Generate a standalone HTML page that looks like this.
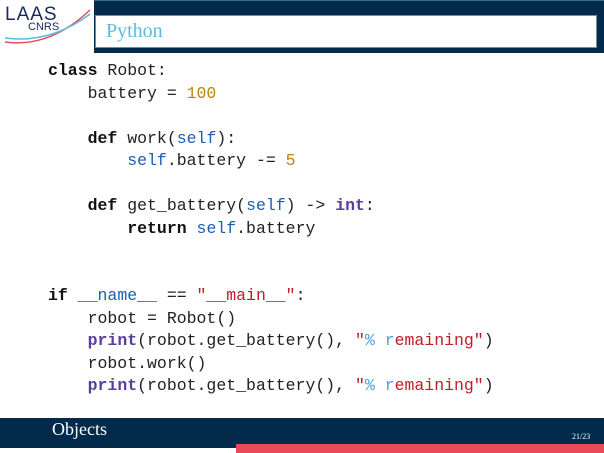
<!DOCTYPE html>
<html><head><meta charset="utf-8"><style>
body{margin:0;width:604px;height:453px;position:relative;background:#fff;overflow:hidden}
.a{position:absolute}
pre{position:absolute;left:48px;top:60px;margin:0;font-family:"Liberation Mono",monospace;font-size:16.5px;line-height:22.5px;color:#222}
b{font-weight:bold;color:#111}
.k{color:#1a5fb4}.n{color:#b8860b}.p{color:#5a3e9e;font-weight:bold}.s{color:#c01c28}.f{color:#4aa3df}
</style></head><body>
<div class="a" style="left:94px;top:0;width:510px;height:53px;background:#022a4b;border-top:1px solid #3a6a8a;box-sizing:border-box"></div>
<div class="a" style="left:95px;top:15px;width:502px;height:33px;background:#fff;border:1px solid #7a8a9a;box-sizing:border-box"></div>
<div class="a" style="left:106px;top:20px;font-family:'Liberation Serif',serif;font-size:20px;color:#5bbcdc">Python</div>
<div class="a" style="left:5px;top:4px;font-family:'Liberation Sans',sans-serif;font-size:19px;letter-spacing:1px;color:#1a2a5a">LAAS</div>
<div class="a" style="left:28px;top:21px;font-family:'Liberation Sans',sans-serif;font-size:11px;color:#1a2a5a">CNRS</div>
<svg class="a" style="left:0;top:0" width="94" height="50"><path d="M5 42 Q50 48 90 10" stroke="#e84a5a" stroke-width="1.5" fill="none"/><path d="M5 38 Q50 44 90 14" stroke="#5bbcdc" stroke-width="1.5" fill="none"/></svg>
<pre><b>class</b> Robot:
    battery = <span class="n">100</span>

    <b>def</b> work(<span class="k">self</span>):
        <span class="k">self</span>.battery -= <span class="n">5</span>

    <b>def</b> get_battery(<span class="k">self</span>) -&gt; <span class="p">int</span>:
        <b>return</b> <span class="k">self</span>.battery


<b>if</b> <span class="k">__name__</span> == <span class="s">"__main__"</span>:
    robot = Robot()
    <span class="p">print</span>(robot.get_battery(), <span class="s">"<span class="f">%</span> <span class="f">r</span>emaining"</span>)
    robot.work()
    <span class="p">print</span>(robot.get_battery(), <span class="s">"<span class="f">%</span> <span class="f">r</span>emaining"</span>)</pre>
<div class="a" style="left:0;top:418px;width:604px;height:30px;background:#022a4b"></div>
<div class="a" style="left:236px;top:444px;width:368px;height:9px;background:#e84a5a"></div>
<div class="a" style="left:52px;top:419px;font-family:'Liberation Serif',serif;font-size:18px;color:#fff">Objects</div>
<div class="a" style="left:572px;top:432px;font-family:'Liberation Serif',serif;font-size:8px;color:#fff">21/23</div>
</body></html>
